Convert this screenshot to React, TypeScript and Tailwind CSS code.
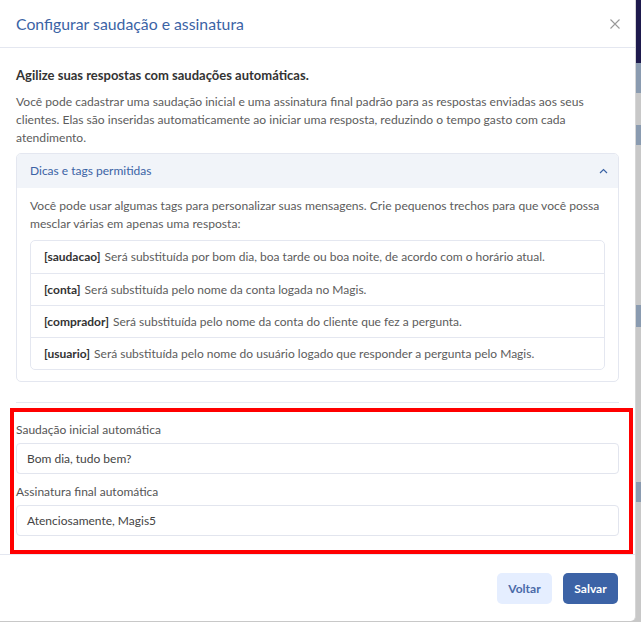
const font = { fontFamily: 'Lato, "Noto Sans", sans-serif' };

const tags = [
  ["[saudacao]", "Será substituída por bom dia, boa tarde ou boa noite, de acordo com o horário atual."],
  ["[conta]", "Será substituída pelo nome da conta logada no Magis."],
  ["[comprador]", "Será substituída pelo nome da conta do cliente que fez a pergunta."],
  ["[usuario]", "Será substituída pelo nome do usuário logado que responder a pergunta pelo Magis."],
];

export default function App() {
  return (
    <div className="flex w-[641px] h-[622px] overflow-hidden bg-[#c8c8c8]" style={font}>
      <div className="flex flex-col w-[636px] h-[621px] bg-white rounded-br-[5px] border-r border-[#d6d6d6]">
        <header className="flex items-center justify-between h-[48px] pl-4 pr-[16px] border-b border-[#e4e7f0] shrink-0">
          <h1 className="text-[15.8px] text-[#3b63a5]">Configurar saudação e assinatura</h1>
          <svg width="10" height="10" viewBox="0 0 10 10" className="mr-[-1px]">
            <path d="M0.5 0.5 L9.5 9.5 M9.5 0.5 L0.5 9.5" stroke="#9a9a9a" strokeWidth="1.1" />
          </svg>
        </header>

        <div className="flex flex-col px-4 pt-[18px] flex-1">
          <p className="text-[13px] leading-[18px] font-bold text-[#333]">
            Agilize suas respostas com saudações automáticas.
          </p>
          <p className="mt-[9px] text-[12.1px] leading-[18px] text-[#5c5c5c]">
            Você pode cadastrar uma saudação inicial e uma assinatura final padrão para as respostas enviadas aos seus
            clientes. Elas são inseridas automaticamente ao iniciar uma resposta, reduzindo o tempo gasto com cada
            atendimento.
          </p>

          <div className="mt-[6px] border border-[#e4e7f0] rounded-[5px] overflow-hidden">
            <div className="flex items-center justify-between h-[34px] pl-[13px] pr-[10px] bg-[#f1f4f9]">
              <span className="text-[12px] text-[#3b63a5]">Dicas e tags permitidas</span>
              <svg width="9" height="6" viewBox="0 0 9 6">
                <path d="M1 5 L4.5 1.5 L8 5" fill="none" stroke="#3b63a5" strokeWidth="1.2" />
              </svg>
            </div>
            <div className="px-[13px] pt-[9px] pb-[11px]">
              <p className="text-[12.1px] leading-[18px] text-[#5c5c5c]">
                Você pode usar algumas tags para personalizar suas mensagens. Crie pequenos trechos para que você possa
                mesclar várias em apenas uma resposta:
              </p>
              <ul className="mt-[7px] border border-[#e4e7f0] rounded-[5px]">
                {tags.map(([tag, text], i) => (
                  <li
                    key={tag}
                    className={`flex items-center h-[32px] px-[13px] text-[12px] text-[#5c5c5c] ${i > 0 ? "border-t border-[#e4e7f0]" : ""}`}
                  >
                    <span className="font-bold text-[#333] mr-[4px]">{tag}</span>
                    {text}
                  </li>
                ))}
              </ul>
            </div>
          </div>

          <hr className="mt-[20px] border-[#e4e7f0]" />

          <section className="mt-[5px] ml-[-6px] mr-[-14px] border-4 border-[#ff0000] pl-[2px] pr-[10px] pt-[10px] pb-[14px]">
            <label className="block text-[12px] leading-[16px] text-[#555]">Saudação inicial automática</label>
            <div className="mt-[5px] flex items-center h-[31px] px-[10px] border border-[#e2e5ee] rounded-[4px] text-[12px] text-[#444]">
              Bom dia, tudo bem?
            </div>
            <label className="block mt-[10px] text-[12px] leading-[16px] text-[#555]">Assinatura final automática</label>
            <div className="mt-[5px] flex items-center h-[31px] px-[10px] border border-[#e2e5ee] rounded-[4px] text-[12px] text-[#444]">
              Atenciosamente, Magis5
            </div>
          </section>
        </div>

        <footer className="flex justify-end gap-[11px] h-[67px] pt-[18px] pr-[17px] border-t border-[#e4e7f0] shrink-0">
          <button className="w-[55px] h-[31px] rounded-[5px] bg-[#e5eeff] text-[12px] font-bold text-[#4a6aa8]">
            Voltar
          </button>
          <button className="w-[55px] h-[31px] rounded-[5px] bg-[#3c63a6] text-[12px] font-bold text-white">
            Salvar
          </button>
        </footer>
      </div>

      <div className="flex flex-col w-[5px]">
        <div className="h-[63px] bg-[#1e1a4d]" />
        <div className="h-[30px] bg-[#8a9bb0]" />
        <div className="h-[32px] bg-[#c8c8c8]" />
        <div className="h-[20px] bg-[#8a9bb0]" />
        <div className="h-[160px] bg-[#c8c8c8]" />
        <div className="h-[22px] bg-[#8a9bb0]" />
        <div className="h-[155px] bg-[#c8c8c8]" />
        <div className="h-[20px] bg-[#8a9bb0]" />
        <div className="flex-1 bg-[#c8c8c8]" />
      </div>
    </div>
  );
}
